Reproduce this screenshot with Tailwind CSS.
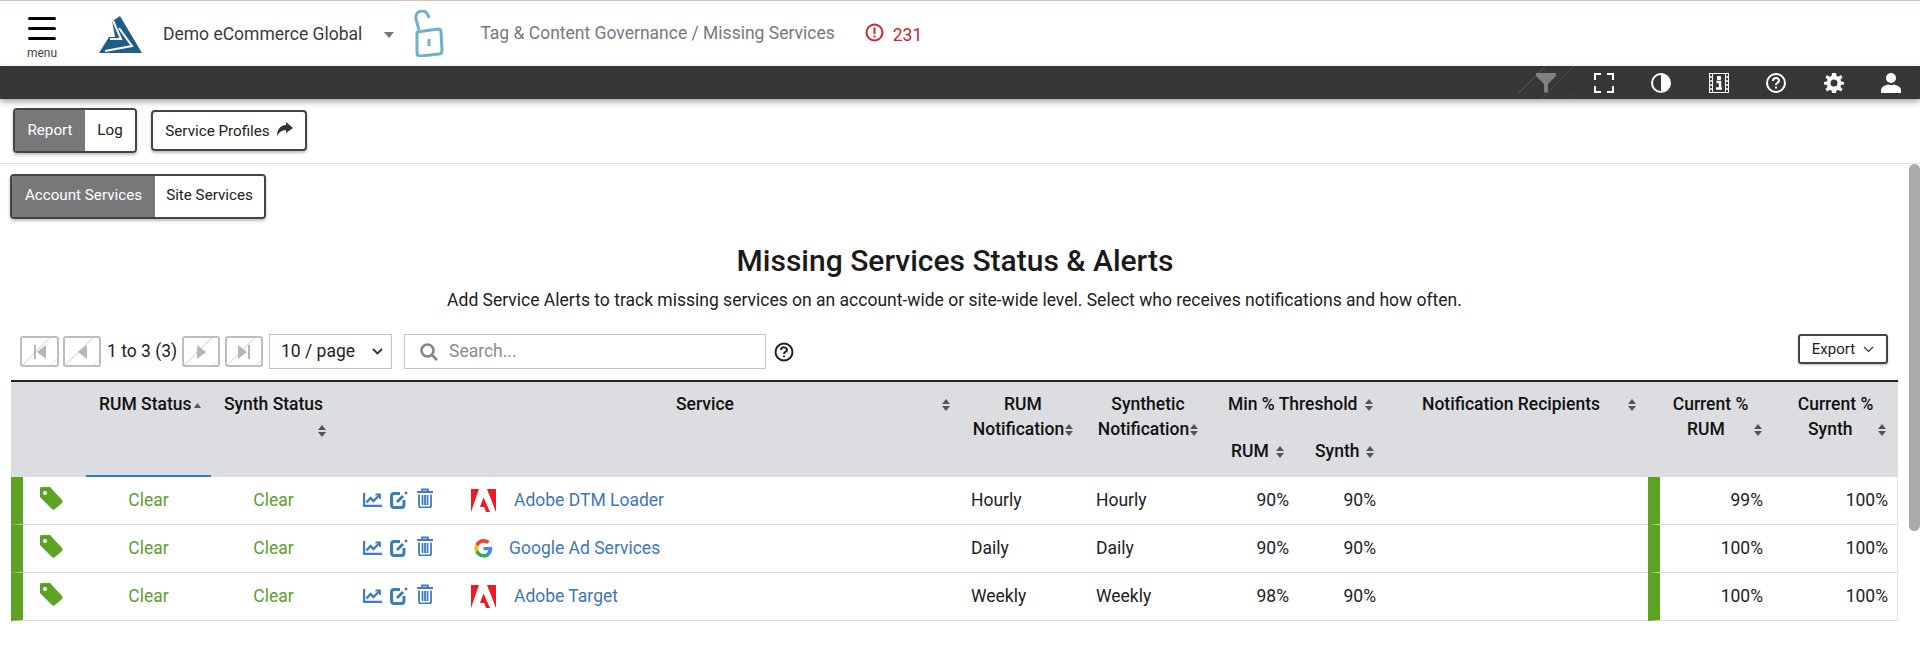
<!DOCTYPE html>
<html lang="en">
<head>
  <meta charset="UTF-8" />
  <title>Missing Services</title>
  <script src="https://cdn.jsdelivr.net/npm/@tailwindcss/browser@4"></script>
</head>
<body class="bg-white h-[656px] overflow-hidden font-[family-name:Roboto,sans-serif] text-[17.5px] text-[#212121]">
  <!-- top header -->
  <header class="h-[66px] border-t border-t-[#d9bcc6] flex items-start relative">
    <div class="w-[84px] flex flex-col items-center pt-[16px]">
      <div class="w-[28px] flex flex-col gap-[7px]">
        <span class="block h-[3px] bg-black rounded-full"></span>
        <span class="block h-[3px] bg-black rounded-full"></span>
        <span class="block h-[3px] bg-black rounded-full"></span>
      </div>
      <span class="text-[12px] leading-[14px] mt-[6px] text-[#444]">menu</span>
    </div>
    <svg class="ml-[15px] mt-[14px]" width="43" height="38" viewBox="0 0 43 38">
      <path d="M12 0 L15 5 L21 1 L43 38 L0 38 L10 22 L16 22 Z" fill="#1f5f87"/>
      <path d="M12 1 L22 24 L11 24 M20 13 L33 31 L6 36" fill="none" stroke="#fff" stroke-width="2"/>
    </svg>
    <span class="ml-[21px] mt-[23px] leading-[20px] text-[#3c3c3c]">Demo eCommerce Global</span>
    <span class="ml-[22px] mt-[31px] w-0 h-0 border-x-[5px] border-x-transparent border-t-[6px] border-t-[#777]"></span>
    <svg class="ml-[18px] mt-[9px]" width="32" height="47" viewBox="0 0 32 47" fill="none" stroke="#6fb1c8" stroke-width="3">
      <path d="M7 20 L4 9 C3 3 7 1 10 1 C14 1 16 4 17 8"/>
      <path d="M5 22 L26 19 Q29 19 29 22 L30 40 Q30 44 27 44 L9 46 Q5 46 5 43 Z" stroke-linejoin="round"/>
      <path d="M17 29 V36" stroke-width="3"/>
    </svg>
    <span class="ml-[36px] mt-[22px] leading-[20px] text-[#77787c]">Tag &amp; Content Governance / Missing Services</span>
    <svg class="ml-[30px] mt-[22px]" width="19" height="19" viewBox="0 0 19 19" fill="none" stroke="#d2232a" stroke-width="2">
      <circle cx="9.5" cy="9.5" r="8"/>
      <path d="M9.5 4.5 V11 M9.5 12.5 V14.5"/>
    </svg>
    <span class="ml-[9px] mt-[24px] leading-[20px] text-[#d2232a]">231</span>
  </header>

  <!-- dark toolbar -->
  <div class="h-[33px] bg-[#373737] shadow-[0_3px_6px_rgba(0,0,0,0.35)] flex items-center justify-end relative pr-[19px] gap-[37.5px]">
    <div class="w-[56px] h-[33px] -mr-[18px] flex items-center justify-center bg-[repeating-linear-gradient(135deg,transparent_0,transparent_19px,#4a4a4a_19px,#4a4a4a_20px)]">
      <svg width="20" height="20" viewBox="0 0 20 20" fill="#808080"><path d="M0 0H20V3L12 11V19Q10 20 8 19V11L0 3Z"/></svg>
    </div>
    <svg width="20" height="20" viewBox="0 0 20 20" fill="none" stroke="#fff" stroke-width="2"><path d="M1 7V1H7M13 1H19V7M19 13V19H13M7 19H1V13"/></svg>
    <svg width="20" height="20" viewBox="0 0 20 20"><circle cx="10" cy="10" r="9" fill="none" stroke="#fff" stroke-width="2"/><path d="M10 1A9 9 0 0 1 10 19Z" fill="#fff"/></svg>
    <svg width="20" height="20" viewBox="0 0 20 20" fill="none" stroke="#fff"><rect x=".5" y=".5" width="19" height="19" stroke-width="1"/><path d="M3.500 1V19M16.500 1V19" stroke-width="1"/><path d="M1 4H3M1 8H3M1 12H3M1 16H3M17 4H19M17 8H19M17 12H19M17 16H19" stroke-width="1.500"/><path d="M7.500 9H11V15.500H13M7 15.500H13" stroke-width="2.400"/><path d="M8.500 3.500H11.500V6.500H8.500Z" fill="#fff" stroke-width="1"/></svg>
    <svg width="20" height="20" viewBox="0 0 20 20" fill="none" stroke="#fff" stroke-width="2"><circle cx="10" cy="10" r="9"/><path d="M7 8C7 3.500 13.500 4.500 13 8C12.700 10 10 9.500 10 12"/><path d="M10 13.500V15.500"/></svg>
    <svg width="20" height="20" viewBox="0 0 20 20"><path fill="#fff" fill-rule="evenodd" d="M8 0H12L12.500 3L14.500 3.800L17 2L18.500 4.500L16.500 6.500L17 8.500L20 9V11.500L17 12L16.500 14L18.500 16L17 18.500L14.500 17L12.500 17.500L12 20H8L7.500 17.500L5.500 17L3 18.500L1.500 16L3.500 14L3 12L0 11.500V9L3 8.500L3.500 6.500L1.500 4.500L3 2L5.500 3.800L7.500 3ZM10 6.500A3.500 3.500 0 1 0 10 13.500A3.500 3.500 0 1 0 10 6.500Z"/></svg>
    <svg width="20" height="20" viewBox="0 0 20 20" fill="#fff"><circle cx="10" cy="5" r="5"/><path d="M0 20V17Q0 13 7 11.500Q10 13 13 11.500Q20 13 20 17V20Z"/></svg>
  </div>

  <!-- sub bar -->
  <div class="h-[65px] border-b border-b-[#e0e0e0] flex items-start pl-[13px] pt-[9px] text-[15.2px]">
    <div class="flex h-[45px] w-[124px] border-2 border-[#444] rounded-[4px] overflow-hidden shadow-[0_2px_3px_rgba(0,0,0,0.25)]">
      <span class="w-[70px] bg-[#77787a] text-white flex items-center justify-center">Report</span>
      <span class="flex-1 bg-white flex items-center justify-center">Log</span>
    </div>
    <div class="ml-[14px] mt-[2px] h-[41px] w-[156px] border-2 border-[#444] rounded-[4px] flex items-center justify-center gap-[6px] pt-[1px] shadow-[0_2px_3px_rgba(0,0,0,0.25)]">
      <span>Service Profiles</span>
      <svg class="-mt-[4px]" width="17" height="14" viewBox="0 0 17 14" fill="#333"><path d="M10 0L17 6L10 11V8C6 8 3 10 1 14C1 8 4 3 10 3Z"/></svg>
    </div>
  </div>

  <div class="flex">
    <main class="w-[1909px]">
      <div class="pl-[10px] pt-[10px]">
        <div class="flex h-[45px] w-[256px] border-2 border-[#444] rounded-[4px] overflow-hidden text-[15.2px] shadow-[0_2px_3px_rgba(0,0,0,0.25)]">
          <span class="w-[143px] bg-[#77787a] text-white flex items-center justify-center pb-[2px]">Account Services</span>
          <span class="flex-1 bg-white flex items-center justify-center pb-[2px]">Site Services</span>
        </div>
      </div>
      <h1 class="mt-[24px] text-center text-[30px] leading-[36px] font-medium text-[#1a1a1a] pl-[1px]">Missing Services Status &amp; Alerts</h1>
      <p class="mt-[9px] text-center leading-[24px]">Add Service Alerts to track missing services on an account-wide or site-wide level. Select who receives notifications and how often.</p>

      <!-- table controls -->
      <div class="mt-[22px] h-[35px] flex items-center pl-[20px] pr-[21px]">
        <button class="w-[39px] h-[31px] border-2 border-[#bdbdbd] rounded-[3px] flex items-center justify-center bg-[repeating-linear-gradient(135deg,transparent_0,transparent_19px,#e4e4e4_19px,#e4e4e4_20px)]">
          <svg width="14" height="14" viewBox="0 0 14 14" fill="#b5b5b5"><path d="M1 0H3V14H1ZM13 0V14L4 7Z"/></svg>
        </button>
        <button class="ml-[4px] w-[38px] h-[31px] border-2 border-[#bdbdbd] rounded-[3px] flex items-center justify-center bg-[repeating-linear-gradient(135deg,transparent_0,transparent_19px,#e4e4e4_19px,#e4e4e4_20px)]">
          <svg width="11" height="14" viewBox="0 0 11 14" fill="#b5b5b5"><path d="M10 0V14L1 7Z"/></svg>
        </button>
        <span class="ml-[6px] w-[75px] whitespace-nowrap">1 to 3 (3)</span>
        <button class="w-[38px] h-[31px] border-2 border-[#bdbdbd] rounded-[3px] flex items-center justify-center bg-[repeating-linear-gradient(135deg,transparent_0,transparent_19px,#e4e4e4_19px,#e4e4e4_20px)]">
          <svg width="11" height="14" viewBox="0 0 11 14" fill="#b5b5b5"><path d="M1 0V14L10 7Z"/></svg>
        </button>
        <button class="ml-[5px] w-[38px] h-[31px] border-2 border-[#bdbdbd] rounded-[3px] flex items-center justify-center bg-[repeating-linear-gradient(135deg,transparent_0,transparent_19px,#e4e4e4_19px,#e4e4e4_20px)]">
          <svg width="14" height="14" viewBox="0 0 14 14" fill="#b5b5b5"><path d="M1 0V14L10 7ZM11 0H13V14H11Z"/></svg>
        </button>
        <div class="ml-[6px] w-[123px] h-[35px] border border-[#c4c4c4] flex items-center justify-between pl-[11px] pr-[8px]">
          <span>10 / page</span>
          <svg width="11" height="7" viewBox="0 0 11 7" fill="none" stroke="#333" stroke-width="1.800"><path d="M1 1L5.500 5.500L10 1"/></svg>
        </div>
        <div class="ml-[12px] w-[362px] h-[35px] border border-[#c4c4c4] flex items-center pl-[15px] text-[#8c8c8c]">
          <svg width="18" height="18" viewBox="0 0 18 18" fill="none" stroke="#888" stroke-width="2.600"><circle cx="7.500" cy="7.500" r="6"/><path d="M12 12L17 17"/></svg>
          <span class="ml-[11px]">Search...</span>
        </div>
        <svg class="ml-[8px]" width="20" height="20" viewBox="0 0 20 20" fill="none" stroke="#222" stroke-width="2"><circle cx="10" cy="10" r="8.500"/><path d="M7 8C7 4 13 5 13 8C13 10 10 9.500 10 12"/><path d="M10 13.500V15"/></svg>
        <button class="ml-auto -mt-[5px] w-[90px] h-[30px] border-2 border-[#444] rounded-[3px] flex items-center justify-center gap-[8px] text-[15px] shadow-[0_1px_2px_rgba(0,0,0,0.25)]">
          Export
          <svg width="11" height="7" viewBox="0 0 11 7" fill="none" stroke="#333" stroke-width="1.200"><path d="M1 1L5.500 5.500L10 1"/></svg>
        </button>
      </div>

      <!-- services table -->
      <div class="mt-[11px] pl-[11px]">
        <table class="table-fixed w-[1887px] border-separate border-spacing-0">
          <colgroup>
            <col class="w-[75px]"><col class="w-[125px]"><col class="w-[125px]"><col class="w-[124px]"><col class="w-[498px]"><col class="w-[125px]"><col class="w-[125px]"><col class="w-[87px]"><col class="w-[87px]"><col class="w-[266px]"><col class="w-[125px]"><col class="w-[125px]">
          </colgroup>
          <thead class="bg-[#dcdde1] font-medium text-[#111] leading-[25px]">
            <tr>
              <th rowspan="2" class="border-t-2 border-t-[#222] font-medium"></th>
              <th rowspan="2" class="border-t-2 border-t-[#222] border-b-2 border-b-[#2f80bd] font-medium align-top pt-[10px] pl-[13px] text-left whitespace-nowrap">RUM Status<svg class="inline ml-[2px]" width="7" height="5" viewBox="0 0 7 5" fill="#555"><path d="M3.500 0L7 5H0Z"/></svg></th>
              <th rowspan="2" class="border-t-2 border-t-[#222] font-medium align-top pt-[10px] whitespace-nowrap">Synth Status<div class="flex justify-end pr-[10px] pt-[8px]"><svg width="8" height="12" viewBox="0 0 8 12" fill="#555"><path d="M4 0L8 5H0ZM4 12L0 7H8Z"/></svg></div></th>
              <th rowspan="2" class="border-t-2 border-t-[#222] font-medium"></th>
              <th rowspan="2" class="border-t-2 border-t-[#222] font-medium align-top pt-[10px]"><div class="flex items-center pr-[8px]"><span class="flex-1 text-center pl-[8px]">Service</span><svg width="8" height="12" viewBox="0 0 8 12" fill="#555"><path d="M4 0L8 5H0ZM4 12L0 7H8Z"/></svg></div></th>
              <th rowspan="2" class="border-t-2 border-t-[#222] font-medium align-top pt-[10px] pl-[5px] whitespace-nowrap">RUM<br>Notification<svg class="inline ml-[1px]" width="8" height="12" viewBox="0 0 8 12" fill="#555"><path d="M4 0L8 5H0ZM4 12L0 7H8Z"/></svg></th>
              <th rowspan="2" class="border-t-2 border-t-[#222] font-medium align-top pt-[10px] pl-[5px] whitespace-nowrap">Synthetic<br>Notification<svg class="inline ml-[1px]" width="8" height="12" viewBox="0 0 8 12" fill="#555"><path d="M4 0L8 5H0ZM4 12L0 7H8Z"/></svg></th>
              <th colspan="2" class="border-t-2 border-t-[#222] font-medium align-top h-[48px] pt-[10px] pl-[20px] text-left whitespace-nowrap">Min % Threshold<svg class="inline ml-[8px]" width="8" height="12" viewBox="0 0 8 12" fill="#555"><path d="M4 0L8 5H0ZM4 12L0 7H8Z"/></svg></th>
              <th rowspan="2" class="border-t-2 border-t-[#222] font-medium align-top pt-[10px]"><div class="flex items-center pl-[40px] whitespace-nowrap"><span>Notification Recipients</span><svg class="ml-[28px]" width="8" height="12" viewBox="0 0 8 12" fill="#555"><path d="M4 0L8 5H0ZM4 12L0 7H8Z"/></svg></div></th>
              <th rowspan="2" class="border-t-2 border-t-[#222] font-medium align-top pt-[10px]"><div class="text-center">Current %</div><div class="flex items-center pl-[39px]"><span>RUM</span><svg class="ml-[29px]" width="8" height="12" viewBox="0 0 8 12" fill="#555"><path d="M4 0L8 5H0ZM4 12L0 7H8Z"/></svg></div></th>
              <th rowspan="2" class="border-t-2 border-t-[#222] font-medium align-top pt-[10px]"><div class="text-center">Current %</div><div class="flex items-center pl-[35px]"><span>Synth</span><svg class="ml-[26px]" width="8" height="12" viewBox="0 0 8 12" fill="#555"><path d="M4 0L8 5H0ZM4 12L0 7H8Z"/></svg></div></th>
            </tr>
            <tr>
              <th class="font-medium h-[49px] align-top pt-[11px] pl-[23px] text-left whitespace-nowrap">RUM<svg class="inline ml-[7px]" width="8" height="12" viewBox="0 0 8 12" fill="#555"><path d="M4 0L8 5H0ZM4 12L0 7H8Z"/></svg></th>
              <th class="font-medium align-top pt-[11px] pl-[20px] text-left whitespace-nowrap">Synth<svg class="inline ml-[7px]" width="8" height="12" viewBox="0 0 8 12" fill="#555"><path d="M4 0L8 5H0ZM4 12L0 7H8Z"/></svg></th>
            </tr>
          </thead>
          <tbody>
            <tr class="h-[48px]">
              <td class="border-b border-b-[#dcdcdc] border-l-[12px] border-l-[#5ca323] pl-[16px] align-top pt-[10px]">
                <svg width="24" height="23" viewBox="0 0 24 23" fill="#5ca323"><path fill-rule="evenodd" d="M2 0H11L23 13Q24 15 23 16L16 22Q14 23 13 22L1 10V2Q1 0 2 0ZM6 4A2 2 0 1 0 6 8A2 2 0 1 0 6 4Z"/></svg>
              </td>
              <td class="border-b border-b-[#dcdcdc] text-center text-[#5f9e2f]">Clear</td>
              <td class="border-b border-b-[#dcdcdc] text-center text-[#5f9e2f]">Clear</td>
              <td class="border-b border-b-[#dcdcdc] pl-[27px]">
                <div class="flex items-start gap-[8px] -mt-[4px]">
                  <svg class="mt-[5px]" width="19" height="14" viewBox="0 0 19 14" fill="none" stroke="#3f7cbf" stroke-width="2.400"><path d="M1 0V13H19"/><path d="M3.500 9.500L7.500 5L10.500 8L16 2.500"/><path d="M12.500 1.500H17V6" stroke-width="1.800"/></svg>
                  <svg class="mt-[3px]" width="18" height="18" viewBox="0 0 18 18" fill="none" stroke="#3f7cbf" stroke-width="3"><path d="M10 2.500H4Q1.500 2.500 1.500 5V13.500Q1.500 16.500 4 16.500H11.500Q14 16.500 14 13.500V9"/><path d="M7 11L13 5"/><circle cx="16" cy="2" r="1.500" fill="#3f7cbf" stroke="none"/></svg>
                  <svg class="ml-[1px]" width="16" height="20" viewBox="0 0 16 20" fill="none" stroke="#3f7cbf" stroke-width="1.800"><path d="M0 4H16" stroke-width="2"/><path d="M5 4V1.500H11V4"/><path d="M2 6.500V18Q2 19.300 3.500 19.300H12.500Q14 19.300 14 18V6.500"/><path d="M5.500 7V17M8 7V17M10.500 7V17"/></svg>
                </div>
              </td>
              <td class="border-b border-b-[#dcdcdc] pl-[11px]">
                <div class="flex items-center">
                  <svg width="25" height="23" viewBox="0 0 25 23" fill="#ec1c24"><path d="M0 0H8L0 23ZM16 0H25V23ZM12.500 8.500L19 23H15L13 18H9Z"/></svg>
                  <a class="ml-[18px] text-[#3f76b8]">Adobe DTM Loader</a>
                </div>
              </td>
              <td class="border-b border-b-[#dcdcdc] pl-[13px]">Hourly</td>
              <td class="border-b border-b-[#dcdcdc] pl-[13px]">Hourly</td>
              <td class="border-b border-b-[#dcdcdc] text-right pr-[6px]">90%</td>
              <td class="border-b border-b-[#dcdcdc] text-right pr-[6px]">90%</td>
              <td class="border-b border-b-[#dcdcdc]"></td>
              <td class="border-b border-b-[#dcdcdc] border-l-[12px] border-l-[#5ca323] text-right pr-[10px]">99%</td>
              <td class="border-b border-r border-b-[#dcdcdc] border-r-[#e4e4e4] text-right pr-[9px]">100%</td>
            </tr>
            <tr class="h-[48px]">
              <td class="border-b border-b-[#dcdcdc] border-l-[12px] border-l-[#5ca323] pl-[16px] align-top pt-[10px]">
                <svg width="24" height="23" viewBox="0 0 24 23" fill="#5ca323"><path fill-rule="evenodd" d="M2 0H11L23 13Q24 15 23 16L16 22Q14 23 13 22L1 10V2Q1 0 2 0ZM6 4A2 2 0 1 0 6 8A2 2 0 1 0 6 4Z"/></svg>
              </td>
              <td class="border-b border-b-[#dcdcdc] text-center text-[#5f9e2f]">Clear</td>
              <td class="border-b border-b-[#dcdcdc] text-center text-[#5f9e2f]">Clear</td>
              <td class="border-b border-b-[#dcdcdc] pl-[27px]">
                <div class="flex items-start gap-[8px] -mt-[4px]">
                  <svg class="mt-[5px]" width="19" height="14" viewBox="0 0 19 14" fill="none" stroke="#3f7cbf" stroke-width="2.400"><path d="M1 0V13H19"/><path d="M3.500 9.500L7.500 5L10.500 8L16 2.500"/><path d="M12.500 1.500H17V6" stroke-width="1.800"/></svg>
                  <svg class="mt-[3px]" width="18" height="18" viewBox="0 0 18 18" fill="none" stroke="#3f7cbf" stroke-width="3"><path d="M10 2.500H4Q1.500 2.500 1.500 5V13.500Q1.500 16.500 4 16.500H11.500Q14 16.500 14 13.500V9"/><path d="M7 11L13 5"/><circle cx="16" cy="2" r="1.500" fill="#3f7cbf" stroke="none"/></svg>
                  <svg class="ml-[1px]" width="16" height="20" viewBox="0 0 16 20" fill="none" stroke="#3f7cbf" stroke-width="1.800"><path d="M0 4H16" stroke-width="2"/><path d="M5 4V1.500H11V4"/><path d="M2 6.500V18Q2 19.300 3.500 19.300H12.500Q14 19.300 14 18V6.500"/><path d="M5.500 7V17M8 7V17M10.500 7V17"/></svg>
                </div>
              </td>
              <td class="border-b border-b-[#dcdcdc] pl-[14px]">
                <div class="flex items-center">
                  <svg width="19" height="19" viewBox="0 0 24 24"><path fill="#4285F4" d="M23 12.300c0-.8-.1-1.600-.2-2.300H12v4.300h6.200c-.3 1.400-1.100 2.600-2.300 3.400v2.800h3.700c2.200-2 3.400-5 3.400-8.200z"/><path fill="#34A853" d="M12 23.500c3.100 0 5.700-1 7.600-2.800l-3.700-2.800c-1 .7-2.400 1.100-3.900 1.100-3 0-5.500-2-6.400-4.700H1.800v2.900c1.900 3.800 5.800 6.300 10.200 6.300z"/><path fill="#FBBC05" d="M5.600 14.300c-.5-1.400-.5-3 0-4.500V6.900H1.800c-1.600 3.200-1.600 7 0 10.300z"/><path fill="#EA4335" d="M12 4.600c1.700 0 3.200.6 4.400 1.700l3.300-3.300C17.700 1.100 15 0 12 0 7.600 0 3.700 2.600 1.800 6.400l3.800 2.900C6.500 6.600 9 4.600 12 4.600z"/></svg>
                  <a class="ml-[16px] text-[#3f76b8]">Google Ad Services</a>
                </div>
              </td>
              <td class="border-b border-b-[#dcdcdc] pl-[13px]">Daily</td>
              <td class="border-b border-b-[#dcdcdc] pl-[13px]">Daily</td>
              <td class="border-b border-b-[#dcdcdc] text-right pr-[6px]">90%</td>
              <td class="border-b border-b-[#dcdcdc] text-right pr-[6px]">90%</td>
              <td class="border-b border-b-[#dcdcdc]"></td>
              <td class="border-b border-b-[#dcdcdc] border-l-[12px] border-l-[#5ca323] text-right pr-[10px]">100%</td>
              <td class="border-b border-r border-b-[#dcdcdc] border-r-[#e4e4e4] text-right pr-[9px]">100%</td>
            </tr>
            <tr class="h-[48px]">
              <td class="border-b border-b-[#dcdcdc] border-l-[12px] border-l-[#5ca323] pl-[16px] align-top pt-[10px]">
                <svg width="24" height="23" viewBox="0 0 24 23" fill="#5ca323"><path fill-rule="evenodd" d="M2 0H11L23 13Q24 15 23 16L16 22Q14 23 13 22L1 10V2Q1 0 2 0ZM6 4A2 2 0 1 0 6 8A2 2 0 1 0 6 4Z"/></svg>
              </td>
              <td class="border-b border-b-[#dcdcdc] text-center text-[#5f9e2f]">Clear</td>
              <td class="border-b border-b-[#dcdcdc] text-center text-[#5f9e2f]">Clear</td>
              <td class="border-b border-b-[#dcdcdc] pl-[27px]">
                <div class="flex items-start gap-[8px] -mt-[4px]">
                  <svg class="mt-[5px]" width="19" height="14" viewBox="0 0 19 14" fill="none" stroke="#3f7cbf" stroke-width="2.400"><path d="M1 0V13H19"/><path d="M3.500 9.500L7.500 5L10.500 8L16 2.500"/><path d="M12.500 1.500H17V6" stroke-width="1.800"/></svg>
                  <svg class="mt-[3px]" width="18" height="18" viewBox="0 0 18 18" fill="none" stroke="#3f7cbf" stroke-width="3"><path d="M10 2.500H4Q1.500 2.500 1.500 5V13.500Q1.500 16.500 4 16.500H11.500Q14 16.500 14 13.500V9"/><path d="M7 11L13 5"/><circle cx="16" cy="2" r="1.500" fill="#3f7cbf" stroke="none"/></svg>
                  <svg class="ml-[1px]" width="16" height="20" viewBox="0 0 16 20" fill="none" stroke="#3f7cbf" stroke-width="1.800"><path d="M0 4H16" stroke-width="2"/><path d="M5 4V1.500H11V4"/><path d="M2 6.500V18Q2 19.300 3.500 19.300H12.500Q14 19.300 14 18V6.500"/><path d="M5.500 7V17M8 7V17M10.500 7V17"/></svg>
                </div>
              </td>
              <td class="border-b border-b-[#dcdcdc] pl-[11px]">
                <div class="flex items-center">
                  <svg width="25" height="23" viewBox="0 0 25 23" fill="#ec1c24"><path d="M0 0H8L0 23ZM16 0H25V23ZM12.500 8.500L19 23H15L13 18H9Z"/></svg>
                  <a class="ml-[18px] text-[#3f76b8]">Adobe Target</a>
                </div>
              </td>
              <td class="border-b border-b-[#dcdcdc] pl-[13px]">Weekly</td>
              <td class="border-b border-b-[#dcdcdc] pl-[13px]">Weekly</td>
              <td class="border-b border-b-[#dcdcdc] text-right pr-[6px]">98%</td>
              <td class="border-b border-b-[#dcdcdc] text-right pr-[6px]">90%</td>
              <td class="border-b border-b-[#dcdcdc]"></td>
              <td class="border-b border-b-[#dcdcdc] border-l-[12px] border-l-[#5ca323] text-right pr-[10px]">100%</td>
              <td class="border-b border-r border-b-[#dcdcdc] border-r-[#e4e4e4] text-right pr-[9px]">100%</td>
            </tr>
          </tbody>
        </table>
      </div>
    </main>
    <!-- scrollbar -->
    <div class="w-[11px] h-[367px] bg-[#a9a9ae] rounded-full"></div>
  </div>
</body>
</html>
